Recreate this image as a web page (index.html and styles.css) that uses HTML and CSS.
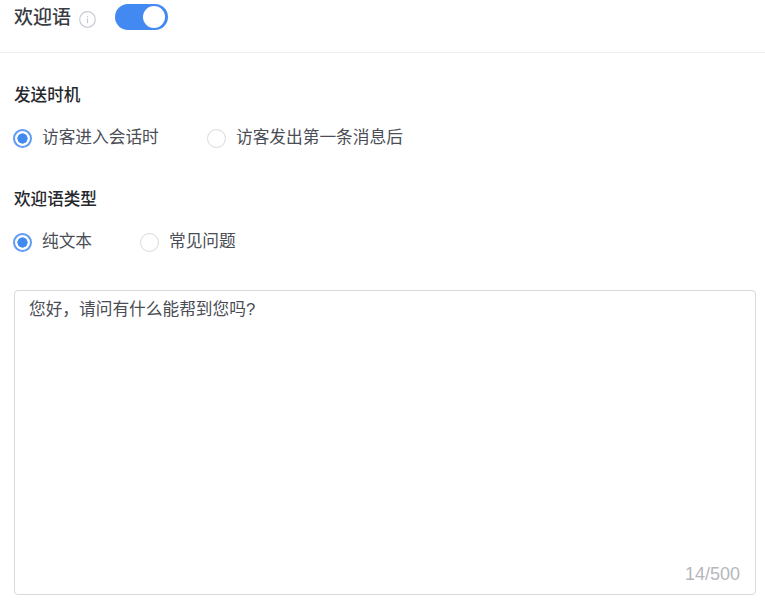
FILE: index.html
```html
<!DOCTYPE html>
<html lang="zh">
<head>
<meta charset="utf-8">
<title>欢迎语</title>
<link rel="stylesheet" href="styles.css">
</head>
<body>
<header class="head">
  <span class="head-title">欢迎语</span>
  <svg class="info" width="17" height="17" viewBox="0 0 17 17"><circle cx="8.5" cy="8.5" r="7.8" fill="none" stroke="#c9ccd4" stroke-width="1.2"/><rect x="8" y="7.4" width="1.1" height="4.8" fill="#c4c7cf"/><rect x="8" y="4.8" width="1.1" height="1.3" fill="#c4c7cf"/></svg>
  <span class="switch"><span class="knob"></span></span>
</header>
<section class="group first">
  <h2 class="label">发送时机</h2>
  <div class="radios">
    <span class="radio on wide"><i class="dot"></i>访客进入会话时</span>
    <span class="radio"><i class="dot"></i>访客发出第一条消息后</span>
  </div>
</section>
<section class="group second">
  <h2 class="label">欢迎语类型</h2>
  <div class="radios">
    <span class="radio on narrow"><i class="dot"></i>纯文本</span>
    <span class="radio"><i class="dot"></i>常见问题</span>
  </div>
</section>
<div class="box">
  <p class="msg">您好，请问有什么能帮到您吗?</p>
  <span class="count">14/500</span>
</div>
</body>
</html>
```
FILE: styles.css
```css
* { box-sizing: border-box; }
html, body { margin: 0; padding: 0; }
body {
  width: 765px;
  height: 603px;
  overflow: hidden;
  background: #fff;
  font-family: "Liberation Sans", "Noto Sans CJK SC", sans-serif;
  color: #4a4d55;
}
.head {
  height: 53px;
  padding: 4px 0 0 14px;
  display: flex;
  align-items: flex-start;
  border-bottom: 1px solid #eeeeee;
}
.head-title { font-size: 19px; font-weight: 500; line-height: 28px; color: #3a3c43; }
.info { margin: 7px 0 0 8px; }
.switch {
  margin: 0 0 0 19px;
  width: 53px;
  height: 26px;
  border-radius: 13px;
  background: #4289f2;
  position: relative;
}
.knob {
  position: absolute;
  top: 2px;
  right: 3px;
  width: 22px;
  height: 22px;
  border-radius: 50%;
  background: #fff;
}
.group { padding-left: 14px; }
.first { padding-top: 32px; }
.second { padding-top: 40px; }
.label {
  margin: 0;
  font-size: 16.6px;
  font-weight: 500;
  line-height: 22px;
  color: #26282d;
}
.radios {
  display: flex;
  margin: 20px 0 0 -1px;
  height: 22px;
  align-items: center;
}
.radio {
  display: flex;
  align-items: center;
  font-size: 16.7px;
  line-height: 22px;
}
.wide { width: 194px; }
.narrow { width: 127px; }
.dot {
  width: 19px;
  height: 19px;
  margin-right: 10px;
  border-radius: 50%;
  border: 1px solid #d9d9d9;
  background: #fff;
  flex: none;
}
.on .dot {
  border: 2px solid #5f9bf4;
  background: radial-gradient(circle, #4289f2 0 4.8px, #fff 5.4px);
}
.box {
  margin: 37px 0 0 14px;
  width: 742px;
  height: 305px;
  border: 1px solid #d9d9d9;
  border-radius: 4px;
  position: relative;
  padding: 8px 14px;
}
.msg { margin: 0; font-size: 16.7px; line-height: 22px; color: #4a4d55; }
.count {
  position: absolute;
  right: 15px;
  bottom: 9px;
  font-size: 18px;
  line-height: 22px;
  color: #b5b7bb;
}
```
